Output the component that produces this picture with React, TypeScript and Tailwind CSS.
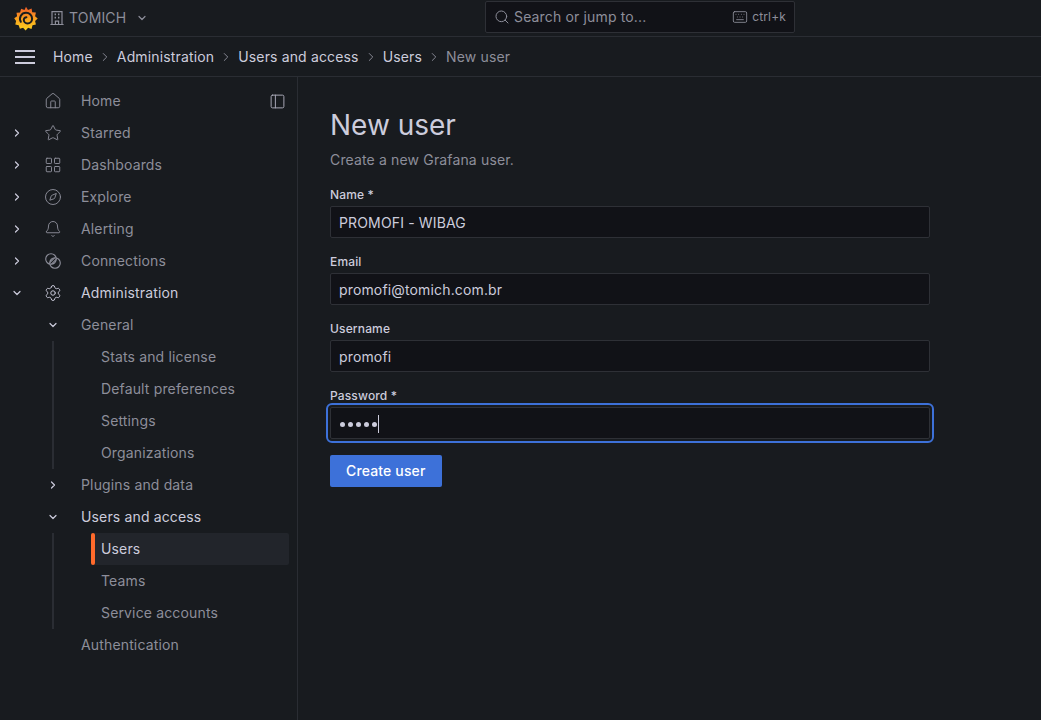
import { ChevronDown, ChevronRight, Compass, Home, LayoutGrid, Star, Bell, Settings, Search, Keyboard, PanelLeft } from "lucide-react";
import type { ReactNode } from "react";

const GrafanaLogo = () => (
  <svg width="24" height="25" viewBox="0 0 24 25">
    <defs>
      <linearGradient id="gf" x1="0.5" y1="1" x2="0.5" y2="0">
        <stop offset="0" stopColor="#fcd21f" />
        <stop offset="0.5" stopColor="#f9a01e" />
        <stop offset="1" stopColor="#f05a28" />
      </linearGradient>
    </defs>
    <path
      fill="url(#gf)"
      d="M12 .8l2 3.2 3.6-1.6.6 3.8 3.7.4-.8 3.6 2.6 2.4-2.6 2.4.8 3.6-3.4.7-1 3.6-3.4-1.2-2.5 2.7-2.5-2.7-3.2 1-1.2-3.4-3.4-.9.8-3.4L.2 12.3l2.9-2-.6-3.6 3.6-.3 1-3.6 3.4 1.3z"
    />
    <path
      d="M6.8 15.8a6 6 0 0 1 5.3-9 5.9 5.9 0 0 1 6 5.9 4.7 4.7 0 0 1-4.7 4.7 3.6 3.6 0 0 1-3.6-3.6 2.6 2.6 0 0 1 2.6-2.6"
      fill="none"
      stroke="#181b1f"
      strokeWidth="2"
      strokeLinecap="round"
    />
  </svg>
);

const BuildingIcon = () => (
  <svg width="16" height="16" viewBox="0 0 16 16" fill="none" stroke="currentColor" strokeWidth="1.2" className="ml-[11px] text-[#8d8e9a]">
    <path d="M3 14.5V1.6h10v12.9M1.4 14.5h13.2M6.4 14.5v-3.4h3.2v3.4" />
    <path d="M5.6 4.4h1.4M9 4.4h1.4M5.6 7.6h1.4M9 7.6h1.4" strokeWidth="1.6" />
  </svg>
);

const ConnectionsIcon = () => (
  <svg width="16" height="16" viewBox="0 0 16 16" fill="none" stroke="currentColor" strokeWidth="1.1">
    <circle cx="6" cy="6" r="5.3" />
    <circle cx="10" cy="10" r="5.3" />
    <path d="M4.8 9.6l4.8-4.8M6.4 11.2l4.8-4.8" />
  </svg>
);

const NavRow = ({
  label,
  icon,
  chevron,
  active,
}: {
  label: string;
  icon?: ReactNode;
  chevron?: "right" | "down";
  active?: boolean;
}) => (
  <div className="flex h-8 items-center">
    <div className="flex w-[34px] justify-center text-[#ccccdc]">
      {chevron === "right" && <ChevronRight size={12} strokeWidth={2.4} />}
      {chevron === "down" && <ChevronDown size={12} strokeWidth={2.4} />}
    </div>
    <div className="flex w-[38px] justify-center text-[#8d8e9a]">{icon}</div>
    <span className={`ml-[9px] ${active ? "text-[#ccccdc]" : "text-[#8d8e9a]"}`}>{label}</span>
  </div>
);

const SubRow = ({ label, chevron, active }: { label: string; chevron?: "right" | "down"; active?: boolean }) => (
  <div className="flex h-8 items-center">
    <div className="flex w-[81px] justify-end pr-[22px] text-[#ccccdc]">
      {chevron === "right" && <ChevronRight size={12} strokeWidth={2.4} />}
      {chevron === "down" && <ChevronDown size={12} strokeWidth={2.4} />}
    </div>
    <span className={active ? "text-[#ccccdc]" : "text-[#8d8e9a]"}>{label}</span>
  </div>
);

const LeafGroup = ({ children }: { children: ReactNode }) => (
  <div className="ml-[52px] border-l-2 border-[#2a2d33] pl-[37px] pr-2">{children}</div>
);

const Leaf = ({ label, active }: { label: string; active?: boolean }) => (
  <div className={`flex h-8 items-center rounded-[2px] ${active ? "bg-[#22252b] text-[#ccccdc]" : "text-[#8d8e9a]"}`}>
    <div className={`h-8 w-1 rounded-[2px] ${active ? "bg-[#ff6a2b]" : ""}`} />
    <span className="ml-1.5">{label}</span>
  </div>
);

const Crumb = ({ label, last }: { label: string; last?: boolean }) => (
  <div className="flex items-center">
    <span className={last ? "text-[#8d8e9a]" : "text-[#ccccdc]"}>{label}</span>
    {!last && <ChevronRight size={14} strokeWidth={1.6} className="mx-[5px] text-[#8d8e9a]" />}
  </div>
);

const Field = ({ label, value, focused }: { label: string; value?: string; focused?: boolean }) => (
  <div className="mb-[15px]">
    <div className="mb-[2px] flex h-[18px] items-center text-xs font-medium text-[#ccccdc]">{label}</div>
    <div
      className={`flex h-8 w-[600px] items-center rounded-[2px] border border-[#2e3036] bg-[#111217] px-2 pt-px text-[#ccccdc] ${
        focused ? "outline-2 outline-offset-2 outline-[#3d71d9]" : ""
      }`}
    >
      {value}
      {focused && (
        <>
          <span className="ml-px mt-px flex gap-[3px]">
            {[0, 1, 2, 3, 4].map((i) => (
              <span key={i} className="h-[5px] w-[5px] rounded-full bg-[#ccccdc]" />
            ))}
          </span>
          <span className="ml-[1px] h-[18px] w-px bg-[#ccccdc]" />
        </>
      )}
    </div>
  </div>
);

export default function App() {
  return (
    <div
      className="flex h-[720px] w-[1041px] flex-col overflow-hidden bg-[#181b1f] text-sm tracking-[0.15px] text-[#ccccdc]"
      style={{ fontFamily: "Inter, sans-serif" }}
    >
      {/* top bar */}
      <div className="relative flex h-[37px] shrink-0 items-center border-b border-[#2a2d33] pl-[14px]">
        <GrafanaLogo />
        <BuildingIcon />
        <span className="ml-[4px] text-[#8d8e9a]">TOMICH</span>
        <ChevronDown size={12} strokeWidth={2.4} className="ml-[10px] text-[#8d8e9a]" />
        <div className="absolute left-[485px] top-[1px] flex h-[32px] w-[310px] items-center rounded-[2px] border border-[#2e3036] bg-[#111217] pl-2 pr-2 text-[#8d8e9a]">
          <Search size={16} strokeWidth={1.5} />
          <span className="ml-1 flex-1">Search or jump to...</span>
          <Keyboard size={16} strokeWidth={1.3} />
          <span className="ml-[4px] text-xs">ctrl+k</span>
        </div>
      </div>

      {/* breadcrumbs */}
      <div className="flex h-[40px] shrink-0 items-center border-b border-[#2a2d33]">
        <div className="ml-[15px] flex w-[20px] flex-col gap-[4px]">
          <div className="h-[2px] bg-[#ccccdc]" />
          <div className="h-[2px] bg-[#ccccdc]" />
          <div className="h-[2px] bg-[#ccccdc]" />
        </div>
        <div className="ml-[18px] flex items-center">
          <Crumb label="Home" />
          <Crumb label="Administration" />
          <Crumb label="Users and access" />
          <Crumb label="Users" />
          <Crumb label="New user" last />
        </div>
      </div>

      <div className="flex min-h-0 flex-1">
        {/* sidebar */}
        <div className="relative w-[298px] shrink-0 border-r border-[#2a2d33] pt-2">
          <PanelLeft size={17} strokeWidth={1.4} className="absolute left-[269px] top-[16px] text-[#a8a8b6]" />
          <NavRow label="Home" icon={<Home size={18} strokeWidth={1.25} />} />
          <NavRow label="Starred" chevron="right" icon={<Star size={18} strokeWidth={1.25} />} />
          <NavRow label="Dashboards" chevron="right" icon={<LayoutGrid size={18} strokeWidth={1.25} />} />
          <NavRow label="Explore" chevron="right" icon={<Compass size={18} strokeWidth={1.25} />} />
          <NavRow label="Alerting" chevron="right" icon={<Bell size={18} strokeWidth={1.25} />} />
          <NavRow label="Connections" chevron="right" icon={<ConnectionsIcon />} />
          <NavRow label="Administration" chevron="down" active icon={<Settings size={18} strokeWidth={1.25} className="text-[#ccccdc]" />} />
          <SubRow label="General" chevron="down" />
          <LeafGroup>
            <Leaf label="Stats and license" />
            <Leaf label="Default preferences" />
            <Leaf label="Settings" />
            <Leaf label="Organizations" />
          </LeafGroup>
          <SubRow label="Plugins and data" chevron="right" />
          <SubRow label="Users and access" chevron="down" active />
          <LeafGroup>
            <Leaf label="Users" active />
            <Leaf label="Teams" />
            <Leaf label="Service accounts" />
          </LeafGroup>
          <SubRow label="Authentication" />
        </div>

        {/* content */}
        <div className="flex-1 pl-8 pt-[28px]">
          <h1 className="h-[40px] text-[28px] leading-[40px] tracking-normal text-[#ccccdc]">New user</h1>
          <p className="mt-[5px] h-5 leading-5 text-[#8d8e9a]">Create a new Grafana user.</p>
          <div className="mt-[16px]">
            <Field label="Name *" value="PROMOFI - WIBAG" />
            <Field label="Email" value="promofi@tomich.com.br" />
            <Field label="Username" value="promofi" />
            <Field label="Password *" focused />
          </div>
          <button className="mt-[1px] h-8 rounded-[2px] bg-[#3d71d9] px-4 font-medium text-white">Create user</button>
        </div>
      </div>
    </div>
  );
}
